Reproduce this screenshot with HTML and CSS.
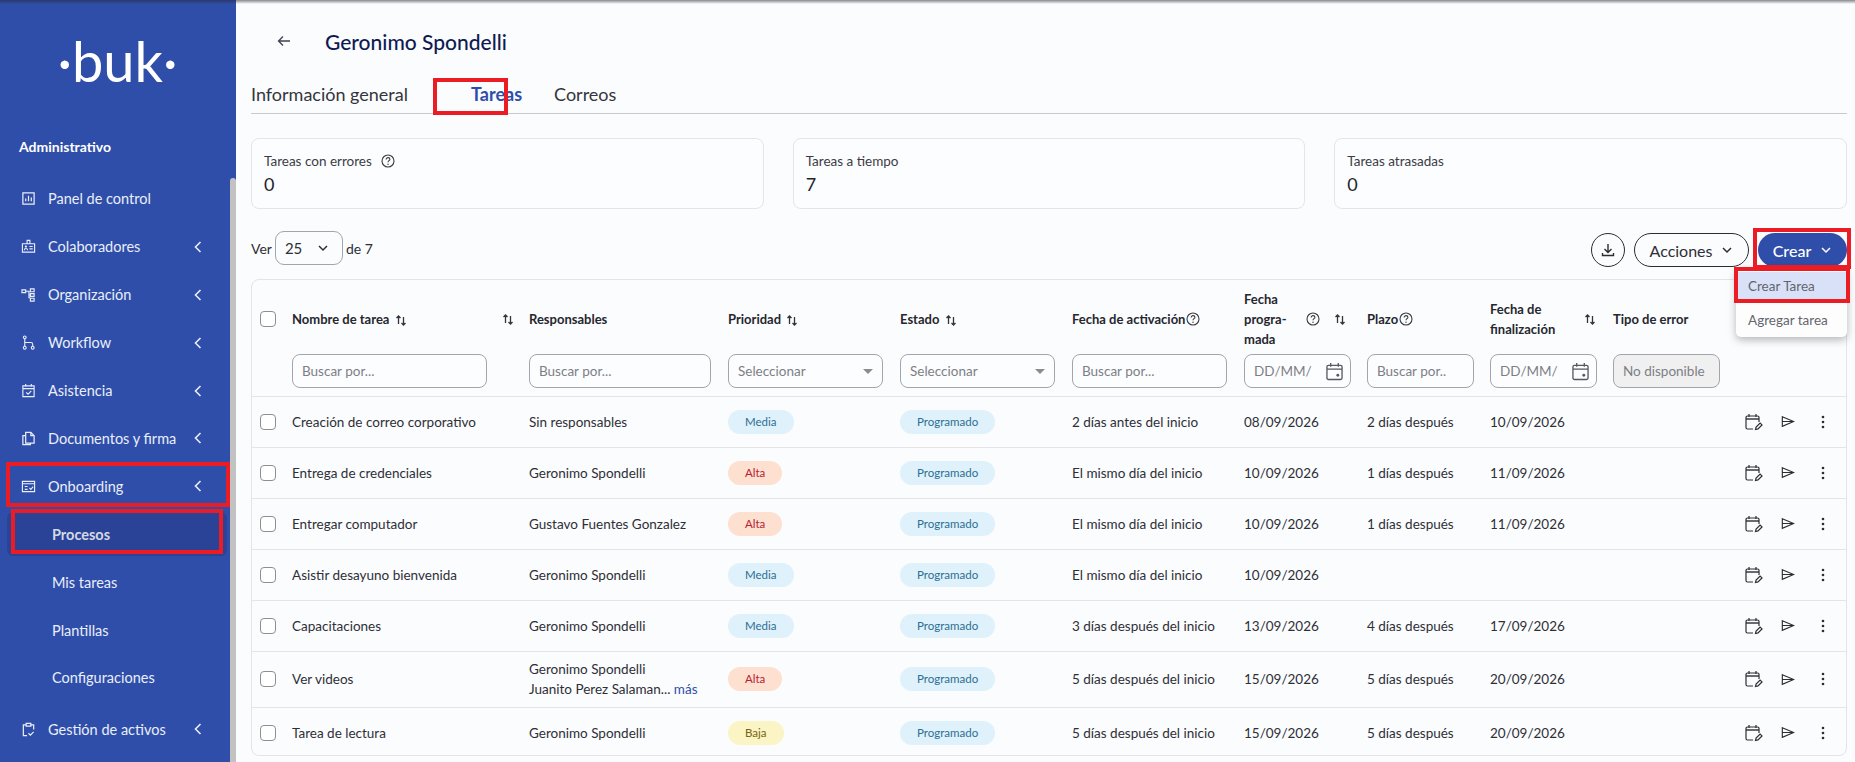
FILE: index.html
```html
<!DOCTYPE html>
<html>
<head>
  <meta charset="UTF-8">
  <title>Geronimo Spondelli - Tareas</title>
  <link rel="stylesheet" href="styles.css">
</head>

<body>
  <svg class="defs" width="0" height="0">
    <symbol id="i-sort" viewBox="0 0 12 12"><path d="M3.5 10V2M1.5 4l2-2 2 2M8.5 3v8M6.5 9l2 2 2-2" fill="none" stroke="currentColor" stroke-width="1.3"/></symbol>
    <symbol id="i-help" viewBox="0 0 14 14"><circle cx="7" cy="7" r="6" fill="none" stroke="currentColor" stroke-width="1.1"/><path d="M5.2 5.4C5.2 3 8.9 3.2 8.9 5.3 8.9 6.7 7 6.7 7 8.3" fill="none" stroke="currentColor" stroke-width="1.1"/><circle cx="7" cy="10.2" r=".7" fill="currentColor"/></symbol>
    <symbol id="i-left" viewBox="0 0 10 14"><path d="M7.5 2L2.5 7l5 5" fill="none" stroke="currentColor" stroke-width="1.6"/></symbol>
    <symbol id="i-down" viewBox="0 0 12 8"><path d="M2 2l4 4 4-4" fill="none" stroke="currentColor" stroke-width="1.5"/></symbol>
    <symbol id="i-date" viewBox="0 0 18 20"><path d="M2.500 3.500h13a1.500 1.500 0 0 1 1.500 1.500v12a1.500 1.500 0 0 1-1.500 1.500h-13A1.500 1.500 0 0 1 1 17V5a1.500 1.500 0 0 1 1.500-1.500zM1 7.500h16M5 1v4M13 1v4" fill="none" stroke="currentColor" stroke-width="1.400"/><circle cx="12.500" cy="14" r="1.500" fill="currentColor"/></symbol>
    <symbol id="i-cal-edit" viewBox="0 0 18 18"><path d="M8 16H2.500A1.500 1.500 0 0 1 1 14.500V4.500A1.500 1.500 0 0 1 2.500 3h10A1.500 1.500 0 0 1 14 4.500V9M4 1v3M11 1v3" fill="none" stroke="currentColor" stroke-width="1.200"/><path d="M1 5h13v2H1z" fill="currentColor" opacity=".7"/><path d="M10.500 16.500l.6-2.500 4-4 1.900 1.900-4 4z" fill="none" stroke="currentColor" stroke-width="1.200"/></symbol>
    <symbol id="i-send" viewBox="0 0 16 14"><path d="M1.500 1.500L14.500 7 1.500 12.500zM1.500 7h13" fill="none" stroke="currentColor" stroke-width="1.300"/></symbol>
    <symbol id="i-dots" viewBox="0 0 4 14"><circle cx="2" cy="2" r="1.300" fill="currentColor"/><circle cx="2" cy="7" r="1.300" fill="currentColor"/><circle cx="2" cy="12" r="1.300" fill="currentColor"/></symbol>
  </svg>

  <div class="page">
    <!-- sidebar -->
    <aside class="sidebar">
      <div class="logo">·buk·</div>
      <div class="side-title">Administrativo</div>
      <ul class="nav">
        <li class="nav-item">
          <svg class="nav-icon" viewBox="0 0 16 16"><path d="M2 2h12v12H2zM5 11V8M8 11V5M11 11V7" fill="none" stroke="currentColor" stroke-width="1.300"/></svg>
          <span>Panel de control</span>
        </li>
        <li class="nav-item">
          <svg class="nav-icon" viewBox="0 0 16 16"><path d="M1.500 5h13v9h-13zM6.500 5V1.500h3V5M3.500 12c0-2.500 3.500-2.500 3.500 0M9 8h3.500M9 10.500h3.500" fill="none" stroke="currentColor" stroke-width="1.200"/><circle cx="5.200" cy="8" r="1.200" fill="currentColor"/></svg>
          <span>Colaboradores</span>
          <svg class="chev"><use href="#i-left"/></svg>
        </li>
        <li class="nav-item">
          <svg class="nav-icon" viewBox="0 0 16 16"><path d="M1 3h4v3H1zM10 2h4v3h-4zM10 7h4v3h-4zM10 12h4v3h-4zM5 4.500h3.500v7H10M8.500 8.500H10" fill="none" stroke="currentColor" stroke-width="1.200"/></svg>
          <span>Organización</span>
          <svg class="chev"><use href="#i-left"/></svg>
        </li>
        <li class="nav-item">
          <svg class="nav-icon" viewBox="0 0 16 16"><circle cx="4" cy="2.500" r="1.500" fill="none" stroke="currentColor" stroke-width="1.200"/><circle cx="4" cy="13.500" r="1.500" fill="none" stroke="currentColor" stroke-width="1.200"/><circle cx="12.500" cy="13.500" r="1.500" fill="none" stroke="currentColor" stroke-width="1.200"/><path d="M4 4v8M4 8h6.500a2 2 0 0 1 2 2v2" fill="none" stroke="currentColor" stroke-width="1.200"/></svg>
          <span>Workflow</span>
          <svg class="chev"><use href="#i-left"/></svg>
        </li>
        <li class="nav-item">
          <svg class="nav-icon" viewBox="0 0 16 16"><path d="M2 3h12v11.500H2zM2 6h12M5 1v3M11 1v3M5.500 10l2 2 3.500-3.500" fill="none" stroke="currentColor" stroke-width="1.200"/></svg>
          <span>Asistencia</span>
          <svg class="chev"><use href="#i-left"/></svg>
        </li>
        <li class="nav-item">
          <svg class="nav-icon" viewBox="0 0 16 16"><path d="M5 1.500h5.500L14 5v8H5zM10.500 1.500V5H14M5 5H2v9.500h8V13" fill="none" stroke="currentColor" stroke-width="1.300"/></svg>
          <span>Documentos y firma</span>
          <svg class="chev"><use href="#i-left"/></svg>
        </li>
        <li class="nav-item">
          <svg class="nav-icon" viewBox="0 0 16 16"><path d="M1.500 2.500h13v11h-13zM1.500 5h13M4 8h3M4 11h3M9 9.500l1.500 1.500 2.500-2.800" fill="none" stroke="currentColor" stroke-width="1.200"/></svg>
          <span>Onboarding</span>
          <svg class="chev"><use href="#i-left"/></svg>
        </li>
        <li class="nav-item sub active"><span>Procesos</span></li>
        <li class="nav-item sub"><span>Mis tareas</span></li>
        <li class="nav-item sub"><span>Plantillas</span></li>
        <li class="nav-item sub"><span>Configuraciones</span></li>
        <li class="nav-item last">
          <svg class="nav-icon" viewBox="0 0 16 16"><path d="M5 3H2.500v11.500h4M11 3h2.500v5M5.500 1.500h5V4.500h-5zM8 12l2 2 3.500-3.500" fill="none" stroke="currentColor" stroke-width="1.300"/></svg>
          <span>Gestión de activos</span>
          <svg class="chev"><use href="#i-left"/></svg>
        </li>
      </ul>
      <div class="thumb"></div>
    </aside>

    <!-- content -->
    <main class="content">
      <div class="title-row">
        <svg class="back" viewBox="0 0 14 12"><path d="M13 6H1.500M6 1.500L1.500 6 6 10.500" fill="none" stroke="currentColor" stroke-width="1.300"/></svg>
        <h1>Geronimo Spondelli</h1>
      </div>

      <div class="tabs">
        <span class="tab">Información general</span>
        <span class="tab selected">Tareas</span>
        <span class="tab">Correos</span>
      </div>

      <div class="cards">
        <div class="card">
          <div class="card-label">Tareas con errores <svg class="help card-help"><use href="#i-help"/></svg></div>
          <div class="card-value">0</div>
        </div>
        <div class="card">
          <div class="card-label">Tareas a tiempo</div>
          <div class="card-value">7</div>
        </div>
        <div class="card">
          <div class="card-label">Tareas atrasadas</div>
          <div class="card-value">0</div>
        </div>
      </div>

      <div class="toolbar">
        <div class="per-page">
          Ver
          <div class="page-select"><span>25</span><svg class="caret"><use href="#i-down"/></svg></div>
          de 7
        </div>
        <div class="buttons">
          <div class="btn-round">
            <svg viewBox="0 0 14 14" width="14" height="14"><path d="M7 1v8M3.500 6L7 9.500 10.500 6M1.500 10v2.500h11V10" fill="none" stroke="currentColor" stroke-width="1.400"/></svg>
          </div>
          <div class="btn btn-outline">Acciones <svg class="caret"><use href="#i-down"/></svg></div>
          <div class="btn btn-primary">Crear <svg class="caret"><use href="#i-down"/></svg></div>
        </div>
      </div>

      <div class="table-box">
        <table class="tasks">
          <colgroup>
            <col class="c-check"><col class="c-name"><col class="c-resp"><col class="c-prio"><col class="c-state">
            <col class="c-act"><col class="c-prog"><col class="c-plazo"><col class="c-fin"><col class="c-tipo"><col class="c-ops">
          </colgroup>
          <thead>
            <tr class="head">
              <th class="check"><span class="box"></span></th>
              <th><div class="th-in name-th"><span>Nombre de tarea <svg class="sort"><use href="#i-sort"/></svg></span><svg class="sort"><use href="#i-sort"/></svg></div></th>
              <th>Responsables</th>
              <th>Prioridad <svg class="sort"><use href="#i-sort"/></svg></th>
              <th>Estado <svg class="sort"><use href="#i-sort"/></svg></th>
              <th><div class="th-in tight">Fecha de activación<svg class="help"><use href="#i-help"/></svg></div></th>
              <th><div class="th-in prog-th"><span class="wrap">Fecha<br>progra-<br>mada</span><svg class="help"><use href="#i-help"/></svg><svg class="sort"><use href="#i-sort"/></svg></div></th>
              <th><div class="th-in tight">Plazo<svg class="help"><use href="#i-help"/></svg></div></th>
              <th><div class="th-in fin-th"><span class="wrap">Fecha de<br>finalización</span><svg class="sort"><use href="#i-sort"/></svg></div></th>
              <th>Tipo de error</th>
              <th></th>
            </tr>
            <tr class="filters">
              <th></th>
              <th><div class="field w-name">Buscar por...</div></th>
              <th><div class="field w-resp">Buscar por...</div></th>
              <th><div class="field w-sel">Seleccionar<i class="tri"></i></div></th>
              <th><div class="field w-state">Seleccionar<i class="tri"></i></div></th>
              <th><div class="field w-state">Buscar por...</div></th>
              <th><div class="field w-small">DD/MM/<svg class="date"><use href="#i-date"/></svg></div></th>
              <th><div class="field w-small">Buscar por..</div></th>
              <th><div class="field w-small">DD/MM/<svg class="date"><use href="#i-date"/></svg></div></th>
              <th><div class="field w-small off">No disponible</div></th>
              <th></th>
            </tr>
          </thead>
          <tbody>
            <tr>
              <td class="check"><span class="box"></span></td>
              <td>Creación de correo corporativo</td>
              <td>Sin responsables</td>
              <td><span class="pill media">Media</span></td>
              <td><span class="pill state">Programado</span></td>
              <td>2 días antes del inicio</td>
              <td>08/09/2026</td>
              <td>2 días después</td>
              <td>10/09/2026</td>
              <td></td>
              <td><div class="ops"><svg class="op-cal"><use href="#i-cal-edit"/></svg><svg class="op-send"><use href="#i-send"/></svg><svg class="op-dots"><use href="#i-dots"/></svg></div></td>
            </tr>
            <tr>
              <td class="check"><span class="box"></span></td>
              <td>Entrega de credenciales</td>
              <td>Geronimo Spondelli</td>
              <td><span class="pill alta">Alta</span></td>
              <td><span class="pill state">Programado</span></td>
              <td>El mismo día del inicio</td>
              <td>10/09/2026</td>
              <td>1 días después</td>
              <td>11/09/2026</td>
              <td></td>
              <td><div class="ops"><svg class="op-cal"><use href="#i-cal-edit"/></svg><svg class="op-send"><use href="#i-send"/></svg><svg class="op-dots"><use href="#i-dots"/></svg></div></td>
            </tr>
            <tr>
              <td class="check"><span class="box"></span></td>
              <td>Entregar computador</td>
              <td>Gustavo Fuentes Gonzalez</td>
              <td><span class="pill alta">Alta</span></td>
              <td><span class="pill state">Programado</span></td>
              <td>El mismo día del inicio</td>
              <td>10/09/2026</td>
              <td>1 días después</td>
              <td>11/09/2026</td>
              <td></td>
              <td><div class="ops"><svg class="op-cal"><use href="#i-cal-edit"/></svg><svg class="op-send"><use href="#i-send"/></svg><svg class="op-dots"><use href="#i-dots"/></svg></div></td>
            </tr>
            <tr>
              <td class="check"><span class="box"></span></td>
              <td>Asistir desayuno bienvenida</td>
              <td>Geronimo Spondelli</td>
              <td><span class="pill media">Media</span></td>
              <td><span class="pill state">Programado</span></td>
              <td>El mismo día del inicio</td>
              <td>10/09/2026</td>
              <td></td>
              <td></td>
              <td></td>
              <td><div class="ops"><svg class="op-cal"><use href="#i-cal-edit"/></svg><svg class="op-send"><use href="#i-send"/></svg><svg class="op-dots"><use href="#i-dots"/></svg></div></td>
            </tr>
            <tr>
              <td class="check"><span class="box"></span></td>
              <td>Capacitaciones</td>
              <td>Geronimo Spondelli</td>
              <td><span class="pill media">Media</span></td>
              <td><span class="pill state">Programado</span></td>
              <td>3 días después del inicio</td>
              <td>13/09/2026</td>
              <td>4 días después</td>
              <td>17/09/2026</td>
              <td></td>
              <td><div class="ops"><svg class="op-cal"><use href="#i-cal-edit"/></svg><svg class="op-send"><use href="#i-send"/></svg><svg class="op-dots"><use href="#i-dots"/></svg></div></td>
            </tr>
            <tr class="tall">
              <td class="check"><span class="box"></span></td>
              <td>Ver videos</td>
              <td class="two-lines">Geronimo Spondelli<br>Juanito Perez Salaman... <a class="more">más</a></td>
              <td><span class="pill alta">Alta</span></td>
              <td><span class="pill state">Programado</span></td>
              <td>5 días después del inicio</td>
              <td>15/09/2026</td>
              <td>5 días después</td>
              <td>20/09/2026</td>
              <td></td>
              <td><div class="ops"><svg class="op-cal"><use href="#i-cal-edit"/></svg><svg class="op-send"><use href="#i-send"/></svg><svg class="op-dots"><use href="#i-dots"/></svg></div></td>
            </tr>
            <tr>
              <td class="check"><span class="box"></span></td>
              <td>Tarea de lectura</td>
              <td>Geronimo Spondelli</td>
              <td><span class="pill baja">Baja</span></td>
              <td><span class="pill state">Programado</span></td>
              <td>5 días después del inicio</td>
              <td>15/09/2026</td>
              <td>5 días después</td>
              <td>20/09/2026</td>
              <td></td>
              <td><div class="ops"><svg class="op-cal"><use href="#i-cal-edit"/></svg><svg class="op-send"><use href="#i-send"/></svg><svg class="op-dots"><use href="#i-dots"/></svg></div></td>
            </tr>
          </tbody>
        </table>
      </div>
    </main>

    <!-- menu open under Crear -->
    <div class="menu">
      <div class="menu-item on">Crear Tarea</div>
      <div class="menu-item">Agregar tarea</div>
    </div>

    <!-- red marks drawn over the capture -->
    <div class="mark mark-onb"></div>
    <div class="mark mark-proc"></div>
    <div class="mark mark-tab"></div>
    <div class="mark mark-crear"></div>
    <div class="mark mark-menu"></div>

    <div class="top-shade"></div>
  </div>
</body>
</html>
```

FILE: styles.css
```css
* { box-sizing: border-box; }

html, body {
  margin: 0;
  height: 100%;
  overflow: hidden;
}

body {
  font-family: "Lato", "Open Sans", sans-serif;
  font-size: 14px;
  color: #2e2f36;
  background: #fbfcfe;
}

.defs { position: absolute; }

.page {
  position: relative;
  display: flex;
  width: 1855px;
  height: 762px;
  overflow: hidden;
}

/*********************************
 * sidebar                       *
 *********************************/
.sidebar {
  position: relative;
  flex: 0 0 236px;
  background: #2f4ea9;
  color: #eaeefa;
  overflow: hidden;
}

.logo {
  height: 130px;
  padding-top: 31px;
  text-align: center;
  font-size: 56px;
  line-height: 60px;
  font-weight: 400;
  color: #fff;
  padding-right: 1px;
}

.side-title {
  padding-left: 19px;
  font-size: 14px;
  line-height: 34px;
  font-weight: 700;
  color: #fff;
}

.nav {
  list-style: none;
  margin: 11px 0 0;
  padding: 0;
}

.nav-item {
  display: flex;
  align-items: center;
  height: 47.9px;
  padding-left: 21px;
  font-size: 14.5px;
}

.nav-item.sub { padding-left: 52px; }
.nav-item.last { margin-top: 3.500px; }

.nav-item.active {
  margin: 2px 9px 0 7px;
  height: 44px;
  padding-left: 45px;
  background: #2a4396;
  border-radius: 6px;
  color: #d4d8e6;
  font-weight: 700;
  margin-bottom: 2px;
}

.nav-icon {
  width: 15px;
  height: 15px;
  margin-right: 12px;
}

.nav-item .chev {
  width: 10px;
  height: 14px;
  margin-left: auto;
  margin-right: 33px;
}

.thumb {
  position: absolute;
  top: 178px;
  right: 0;
  width: 6px;
  height: 600px;
  background: #c2c2c2;
  border-radius: 3px 3px 0 0;
}

/*********************************
 * content                       *
 *********************************/
.content {
  flex: 1;
  padding: 0 8px 0 15px;
  min-width: 0;
}

.title-row {
  display: flex;
  align-items: center;
  height: 82px;
  padding-left: 26px;
}

.back {
  width: 14px;
  height: 12px;
  color: #3d4350;
}

h1 {
  margin: 0 0 0 34px;
  font-size: 21px;
  font-weight: 500;
  color: #0e1b52;
}

.tabs {
  display: flex;
  gap: 33px;
  height: 32px;
  border-bottom: 1px solid #c9cace;
  font-size: 18px;
  line-height: 24px;
  color: #34353c;
}

.tab.selected {
  margin-left: -1px;
  padding: 0 0 0 31px;
  color: #2f4ea9;
  font-weight: 700;
}
.tab.selected + .tab { margin-left: -1px; }

.cards {
  display: grid;
  grid-template-columns: repeat(3, 1fr);
  gap: 29px;
  margin-top: 24px;
}

.card {
  height: 71px;
  padding: 13px 12px;
  background: #fcfdff;
  border: 1px solid #e3e5ea;
  border-radius: 8px;
}

.card-label {
  display: flex;
  align-items: center;
  height: 18px;
  font-size: 13.500px;
  color: #3b3c44;
}

.card-value {
  margin-top: 2px;
  font-size: 18px;
  line-height: 24px;
  color: #23242b;
}

.help {
  flex: none;
  width: 14px;
  height: 14px;
  color: #3a3a40;
}

.card-help { margin-left: 9px; }

.toolbar {
  display: flex;
  justify-content: space-between;
  height: 34px;
  margin-top: 24px;
}

.per-page {
  display: flex;
  align-items: center;
  gap: 3px;
  height: 30px;
  font-size: 14px;
}

.page-select {
  display: flex;
  align-items: center;
  justify-content: space-between;
  width: 68px;
  height: 34px;
  margin-top: 0;
  padding: 0 13px 0 9px;
  border: 1px solid #a3a5aa;
  border-radius: 9px;
  font-size: 15px;
}

.caret {
  width: 12px;
  height: 8px;
}

.buttons {
  display: flex;
  gap: 9px;
}

.btn-round {
  display: flex;
  align-items: center;
  justify-content: center;
  width: 34px;
  height: 34px;
  border: 1px solid #2c2d33;
  border-radius: 50%;
  color: #2c2d33;
}

.btn {
  display: flex;
  align-items: center;
  justify-content: center;
  gap: 9px;
  height: 34px;
  border-radius: 17px;
  font-size: 16px;
}

.btn-outline {
  width: 115px;
  margin-right: 0;
  border: 1px solid #2c2d33;
}

.btn-primary {
  width: 89px;
  background: #2f4ea9;
  color: #fff;
  font-weight: 500;
}

/*********************************
 * table                         *
 *********************************/
.table-box {
  height: 477px;
  margin-top: 12px;
  border: 1px solid #e2e4e8;
  border-radius: 8px;
  overflow: hidden;
}

.tasks {
  width: 1594px;
  border-collapse: collapse;
  table-layout: fixed;
}

.c-check { width: 40px; }
.c-name  { width: 237px; }
.c-resp  { width: 199px; }
.c-prio  { width: 172px; }
.c-state { width: 172px; }
.c-act   { width: 172px; }
.c-prog  { width: 123px; }
.c-plazo { width: 123px; }
.c-fin   { width: 123px; }
.c-tipo  { width: 124px; }
.c-ops   { width: 109px; }

.tasks th, .tasks td {
  padding: 0;
  text-align: left;
  font-size: 13.500px;
}

.tasks th {
  font-weight: 700;
  font-size: 13px;
  color: #26272e;
}

.tasks .head th { height: 66px; padding-top: 9px; line-height: 20px; }
.tasks .filters th { height: 47px; vertical-align: top; padding-top: 5px; }

.tasks .filters, .tasks tbody tr { border-bottom: 1px solid #e3e5e9; }
.tasks tbody tr:last-child { border-bottom: 0; }
.tasks tbody tr { height: 51px; }
.tasks tbody tr.tall { height: 56px; }

.tasks td.two-lines { line-height: 20px; }

.check { padding-left: 8px !important; }

.box {
  display: block;
  width: 16px;
  height: 16px;
  border: 1px solid #8d8f95;
  border-radius: 4px;
  background: #fff;
}

.head .check .box { margin-top: -1px; }

.th-in {
  display: flex;
  align-items: center;
}

.name-th {
  justify-content: space-between;
  padding-right: 15px;
}

.tight { gap: 1px; }

.prog-th .wrap { width: 62px; }
.prog-th .sort { margin-left: 14px; }
.fin-th .wrap { width: 92px; }

.sort {
  width: 12px;
  height: 12px;
  vertical-align: -2px;
  margin-left: 2px;
  color: #33343a;
}

.field {
  position: relative;
  display: flex;
  align-items: center;
  height: 34px;
  padding-left: 9px;
  border: 1px solid #a3a5aa;
  border-radius: 8px;
  font-weight: 400;
  font-size: 13.500px;
  color: #7d7f85;
  background: #fcfdff;
}

.w-name  { width: 195px; }
.w-resp  { width: 182px; }
.w-sel   { width: 155px; }
.w-state { width: 155px; }
.w-small { width: 107px; }

.field.off { background: #f0f0f1; }

.tri {
  position: absolute;
  right: 9px;
  top: 14px;
  border-left: 5px solid transparent;
  border-right: 5px solid transparent;
  border-top: 5px solid #8a8c92;
}

.date {
  position: absolute;
  right: 7px;
  top: 7px;
  width: 17px;
  height: 19px;
  color: #565861;
}

.pill {
  display: inline-block;
  height: 24px;
  padding: 0 17px;
  border-radius: 12px;
  font-size: 11.500px;
  line-height: 24px;
}

.media, .state { background: #dff1fa; color: #2c6f94; }
.alta { background: #fee0d1; color: #b9202f; }
.baja { background: #fbf4c4; color: #76660f; }

.more { color: #2f4ea9; }

.ops {
  display: flex;
  align-items: center;
  padding-left: 8px;
  color: #2c2d33;
}

.op-cal { width: 18px; height: 18px; }
.op-send { width: 14px; height: 13px; margin-left: 18px; }
.op-dots { width: 4px; height: 14px; margin-left: 26px; }

/*********************************
 * overlays                      *
 *********************************/
.menu {
  position: absolute;
  left: 1736px;
  top: 268px;
  width: 111px;
  height: 69px;
  padding-top: 4px;
  background: #fdfdfe;
  border-radius: 0 0 5px 5px;
  box-shadow: 0 3px 8px rgba(0, 0, 0, .28);
  z-index: 2;
}

.menu-item {
  height: 32px;
  padding-left: 12px;
  font-size: 13.500px;
  line-height: 30px;
  color: #63656c;
}

.menu-item.on {
  height: 28px;
  margin-bottom: 5px;
  line-height: 28px;
  background: #d9e1f8;
}

.mark {
  position: absolute;
  border: 4px solid #ec1c24;
  z-index: 3;
}

.mark-onb   { left: 6px;    top: 462px; width: 224px; height: 45px; }
.mark-proc  { left: 11px;   top: 509px; width: 212px; height: 45px; }
.mark-tab   { left: 433px;  top: 78px;  width: 75px;  height: 37px; }
.mark-crear { left: 1753px; top: 228px; width: 98px;  height: 41px; }
.mark-menu  { left: 1734px; top: 267px; width: 116px; height: 36px; }

.top-shade {
  position: absolute;
  left: 0;
  top: 0;
  width: 100%;
  height: 4px;
  background: linear-gradient(rgba(40, 40, 50, .55), rgba(40, 40, 50, 0));
  z-index: 4;
}
```
